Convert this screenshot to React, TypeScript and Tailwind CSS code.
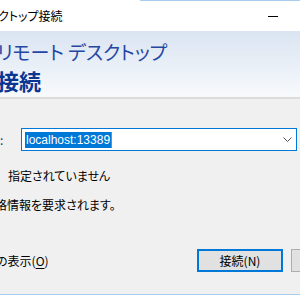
const JP = "font-['Noto_Sans_CJK_JP','Noto_Sans',sans-serif] [font-feature-settings:'palt']"

// Remote Desktop connect dialog, cropped on the left edge like the capture.
export default function App() {
  return (
    <div className={`flex h-[295px] w-[300px] flex-col overflow-hidden bg-[#f0f0f0] text-black ${JP}`}>
      {/* title bar */}
      <div className="h-[1px] shrink-0 bg-white">
        <div className="ml-[140px] h-full bg-[#a9cdee]" />
      </div>
      <div className="flex h-[30px] shrink-0 items-center bg-white">
        <span className="-ml-[2px] text-[12px] leading-none">クトップ接続</span>
        <span className="ml-auto mr-[22px] h-px w-[10px] bg-black" />
      </div>

      {/* banner */}
      <div className="h-[68px] shrink-0 border-b-2 border-[#dcdcdc] bg-gradient-to-b from-[#dae4f2] to-[#f8fafc]">
        <div className="-ml-[3px] mt-[10px] text-[19px] leading-[22px] text-[#2447a4]">リモート デスクトップ</div>
        <div className="-ml-[3px] mt-[4px] text-[22px] font-bold leading-[26px] text-[#0b3593]">接続</div>
      </div>

      {/* form */}
      <div className="flex flex-1 flex-col">
        <div className="mt-[29px] flex h-[23px] items-center">
          <span className="w-[21px] shrink-0 text-[12px] leading-none text-[#1b2d5a]">:</span>
          <div className="flex h-full w-[276px] items-center border border-[#0078d7] bg-white pl-[3px] pr-[4px]">
            <span className="flex items-center">
              <span className="bg-[#0078d7] px-px font-['Liberation_Sans',sans-serif] text-[12px] leading-[16px] text-white">
                localhost:13389
              </span>
              <span className="h-[16px] w-px bg-[#d07a1a]" />
            </span>
            <svg className="ml-auto" width="9" height="5" viewBox="0 0 9 5">
              <path d="M0.5 0.5 L4.5 4.5 L8.5 0.5" fill="none" stroke="#555" strokeWidth="1" />
            </svg>
          </div>
        </div>

        <div className="ml-[8px] mt-[17px] text-[12px] leading-[16px]">指定されていません</div>
        <div className="-ml-[5px] mt-[13px] text-[12px] leading-[16px]">格情報を要求されます。</div>

        <div className="mt-[36px] flex h-[23px] items-center overflow-hidden">
          <div className="w-[197px] shrink-0">
            <span className="-ml-[4px] block text-[12px] leading-[16px]">
              の表示(<span className="underline underline-offset-2">O</span>)
            </span>
          </div>
          <button
            type="button"
            className="flex h-[23px] w-[86px] shrink-0 items-center justify-center border-2 border-[#0078d7] bg-[#e1e1e1] text-[12px] leading-none"
          >
            接続(N)
          </button>
          <button
            type="button"
            className="ml-[8px] h-[23px] w-[86px] shrink-0 border border-[#adadad] bg-[#e1e1e1]"
          />
        </div>
      </div>
      <div className="h-px shrink-0 bg-[#a9cdee]" />
    </div>
  )
}
